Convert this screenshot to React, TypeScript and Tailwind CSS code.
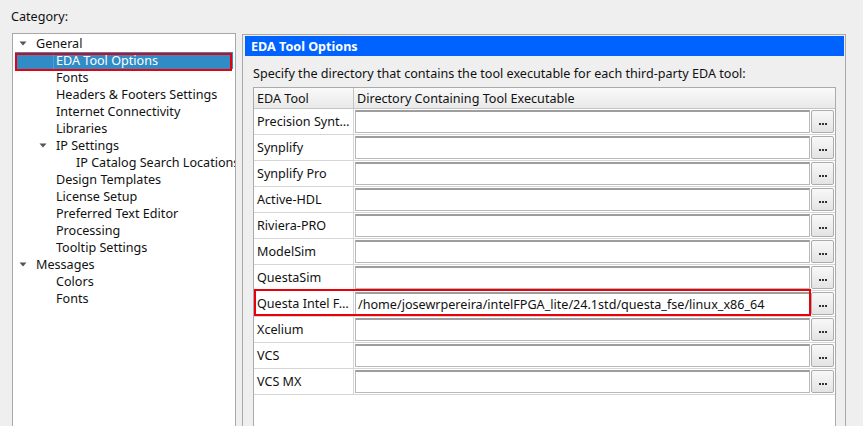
import React from "react";

type Item = { label: string; level: number; arrow?: boolean; selected?: boolean };

const items: Item[] = [
  { label: "General", level: 0, arrow: true },
  { label: "EDA Tool Options", level: 1, selected: true },
  { label: "Fonts", level: 1 },
  { label: "Headers & Footers Settings", level: 1 },
  { label: "Internet Connectivity", level: 1 },
  { label: "Libraries", level: 1 },
  { label: "IP Settings", level: 1, arrow: true },
  { label: "IP Catalog Search Locations", level: 2 },
  { label: "Design Templates", level: 1 },
  { label: "License Setup", level: 1 },
  { label: "Preferred Text Editor", level: 1 },
  { label: "Processing", level: 1 },
  { label: "Tooltip Settings", level: 1 },
  { label: "Messages", level: 0, arrow: true },
  { label: "Colors", level: 1 },
  { label: "Fonts", level: 1 },
];

const tools: { name: string; path?: string; marked?: boolean }[] = [
  { name: "Precision Synt…" },
  { name: "Synplify" },
  { name: "Synplify Pro" },
  { name: "Active-HDL" },
  { name: "Riviera-PRO" },
  { name: "ModelSim" },
  { name: "QuestaSim" },
  {
    name: "Questa Intel F…",
    path: "/home/josewrpereira/intelFPGA_lite/24.1std/questa_fse/linux_x86_64",
    marked: true,
  },
  { name: "Xcelium" },
  { name: "VCS" },
  { name: "VCS MX" },
];

function Arrow() {
  return (
    <svg width="8" height="5" viewBox="0 0 8 5" className="block">
      <path d="M0.5 0.5 L7.5 0.5 L4 4.5 Z" fill="#555" />
    </svg>
  );
}

function TreeRow({ item }: { item: Item }) {
  const pl = item.level === 0 ? "pl-[6px]" : item.level === 1 ? "pl-[26px]" : "pl-[46px]";
  if (item.selected) {
    return (
      <div className="relative h-[17px] mx-[2px] bg-[#308cc6] text-white flex items-center pl-[41px] whitespace-nowrap">
        <div className="absolute left-[38px] top-0 bottom-0 w-px bg-[#4f9fd3]" />
        <span className="relative">{item.label}</span>
        <div className="absolute left-0 right-[1px] top-[1px] -bottom-[2px] border-2 border-[#e8000b]" />
      </div>
    );
  }
  return (
    <div className={`h-[17px] flex items-center whitespace-nowrap ${pl}`}>
      <div className="w-[17px] shrink-0 flex items-center">{item.arrow ? <Arrow /> : null}</div>
      <span>{item.label}</span>
    </div>
  );
}

function Dots() {
  return (
    <div className="flex gap-[1px] mt-[4px]">
      <div className="w-[2px] h-[2px] bg-[#333]" />
      <div className="w-[2px] h-[2px] bg-[#333]" />
      <div className="w-[2px] h-[2px] bg-[#333]" />
    </div>
  );
}

function ToolRow({ t }: { t: (typeof tools)[number] }) {
  return (
    <div className="relative flex h-[26px] border-b border-[#d6d6d6]">
      <div className="w-[100px] shrink-0 border-r border-[#d6d6d6] flex items-center pl-[3px] whitespace-nowrap overflow-hidden">
        {t.name}
      </div>
      <div className="flex-1 flex items-stretch pt-px pb-px pl-px pr-px gap-px">
        <div className="flex-1 bg-white border border-[#b9b9b9] border-t-[#9d9d9d] border-t-2 flex items-center pl-[2px] whitespace-nowrap overflow-hidden">
          {t.path ?? ""}
        </div>
        <div className="w-[23px] rounded-[2px] border border-[#acacac] bg-gradient-to-b from-[#f8f8f8] to-[#e4e4e4] flex items-center justify-center">
          <Dots />
        </div>
      </div>
      {t.marked ? (
        <div className="absolute left-0 right-[24px] -top-[2px] bottom-0 border-2 border-[#e8000b] pointer-events-none" />
      ) : null}
    </div>
  );
}

export default function App() {
  return (
    <div
      className="w-[863px] h-[426px] bg-[#efefef] overflow-hidden text-[12.6px] text-[#111] leading-[17px]"
      style={{ fontFamily: "'Noto Sans', 'Open Sans', sans-serif" }}
    >
      <div className="pl-[11px] pt-[8px] h-[33px]">Category:</div>
      <div className="flex h-[393px]">
        <div className="ml-[12px] w-[224px] shrink-0 bg-white border border-[#a9a9a9] border-b-0 pt-px overflow-hidden">
          {items.map((it, i) => (
            <TreeRow key={i} item={it} />
          ))}
        </div>
        <div className="ml-[6px] mt-px w-[604px] shrink-0 border border-[#a9a9a9] border-b-0 flex flex-col pl-px pr-px pt-px">
          <div className="h-[20px] bg-[#0062ff] text-white font-bold flex items-center pl-[6px] ml-px">
            EDA Tool Options
          </div>
          <div className="pl-[9px] mt-[9px] h-[17px] whitespace-nowrap">
            Specify the directory that contains the tool executable for each third-party EDA tool:
          </div>
          <div className="ml-[9px] mr-[8px] mt-[5px] flex-1 bg-white border border-[#ababab] border-b-0 flex flex-col">
            <div className="flex h-[21px] bg-gradient-to-b from-[#fafafa] to-[#e9e9e9] border-b border-[#c4c4c4]">
              <div className="w-[100px] shrink-0 border-r border-[#c4c4c4] flex items-center pl-[3px]">
                EDA Tool
              </div>
              <div className="flex-1 flex items-center pl-[3px]">Directory Containing Tool Executable</div>
            </div>
            {tools.map((t, i) => (
              <ToolRow key={i} t={t} />
            ))}
          </div>
        </div>
      </div>
    </div>
  );
}
